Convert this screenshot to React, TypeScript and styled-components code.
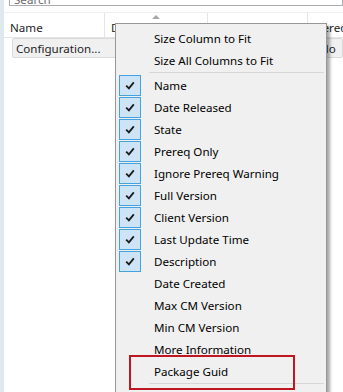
import React from 'react';
import styled, { createGlobalStyle } from 'styled-components';

const GlobalStyle = createGlobalStyle`
    html, body {
        margin: 0;
        padding: 0;
        background: #ffffff;
    }
    body {
        font-family: "Noto Sans", "Open Sans", "DejaVu Sans", sans-serif;
        font-size: 11.6px;
        color: #1e1e1e;
    }
`;

const Shell = styled.div`
    position: relative;
    display: flex;
    width: 343px;
    height: 392px;
    overflow: hidden;
    background: #ffffff;
`;

const WindowEdge = styled.div`
    width: 4px;
    flex-shrink: 0;
    background: #dfe7ef;
`;

const Main = styled.div`
    flex: 1;
    display: flex;
    flex-direction: column;
    min-width: 0;
`;

const SearchBox = styled.div`
    height: 5px;
    margin-left: 5px;
    border: 1px solid #abadb3;
    border-top: none;
    display: flex;
    align-items: flex-end;
    overflow: hidden;
    padding-left: 4px;
`;

const SearchHint = styled.span`
    line-height: 10px;
    color: #6d6d6d;
    white-space: nowrap;
`;

const HeaderRow = styled.div`
    display: flex;
    height: 26px;
    margin-top: 6px;
    border-top: 1px solid #efefef;
    border-bottom: 1px solid #e5e5e5;
    box-sizing: border-box;
`;

const HeaderCell = styled.div<{ $width: number; $pad?: number }>`
    position: relative;
    flex: 0 0 ${(p) => p.$width}px;
    box-sizing: border-box;
    border-right: 1px solid #e5e5e5;
    padding-left: ${(p) => p.$pad ?? 6}px;
    display: flex;
    align-items: center;
    padding-top: 4px;
    white-space: nowrap;
    overflow: hidden;
`;

const SortArrow = styled.span`
    position: absolute;
    top: 2px;
    left: 50%;
    margin-left: -4px;
    width: 0;
    height: 0;
    border-left: 4px solid transparent;
    border-right: 4px solid transparent;
    border-bottom: 4px solid #a7a7a7;
`;

const DataRow = styled.div`
    display: flex;
    height: 20px;
    margin-left: 8px;
    background: #f0f0f0;
    border: 1px solid #dadada;
    border-radius: 2px;
    box-sizing: border-box;
`;

const DataCell = styled.div<{ $width: number; $pad?: number }>`
    flex: 0 0 ${(p) => p.$width}px;
    padding-left: ${(p) => p.$pad ?? 3}px;
    box-sizing: border-box;
    display: flex;
    align-items: center;
    white-space: nowrap;
    overflow: hidden;
`;

const Menu = styled.div`
    position: absolute;
    left: 115px;
    top: 23px;
    width: 212px;
    height: 400px;
    box-sizing: border-box;
    background: #f0f0f0;
    border: 1px solid #979797;
    box-shadow: 3px 3px 3px rgba(0, 0, 0, 0.35);
    padding: 3px 2px;
    color: #000000;
`;

const MenuItem = styled.div`
    display: grid;
    grid-template-columns: 36px 1fr;
    align-items: center;
    height: 22px;
    white-space: nowrap;
`;

const CheckBox = styled.span<{ $on: boolean }>`
    width: 22px;
    height: 21px;
    margin-left: 1px;
    box-sizing: border-box;
    display: flex;
    align-items: center;
    justify-content: center;
    background: ${(p) => (p.$on ? '#cde4f7' : 'transparent')};
    border: 1px solid ${(p) => (p.$on ? '#45a2e0' : 'transparent')};
`;

const Separator = styled.div`
    height: 3px;
    margin-left: 31px;
    display: flex;
    align-items: center;

    &::after {
        content: '';
        flex: 1;
        height: 1px;
        background: #d7d7d7;
    }
`;

const Highlight = styled.div`
    position: absolute;
    left: 129px;
    top: 355px;
    width: 166px;
    height: 35px;
    box-sizing: border-box;
    border: 2px solid #bf1622;
`;

const Check = () => (
    <svg width="10" height="9" viewBox="0 0 10 9">
        <path d="M1.2 4.6 L3.9 7.3 L8.8 1.4" fill="none" stroke="#1b1b1b" strokeWidth="1.8" />
    </svg>
);

const columns: [string, boolean][] = [
    ['Name', true],
    ['Date Released', true],
    ['State', true],
    ['Prereq Only', true],
    ['Ignore Prereq Warning', true],
    ['Full Version', true],
    ['Client Version', true],
    ['Last Update Time', true],
    ['Description', true],
    ['Date Created', false],
    ['Max CM Version', false],
    ['Min CM Version', false],
    ['More Information', false],
    ['Package Guid', false],
];

const App: React.FC = () => {
    return (
        <Shell>
            <GlobalStyle />
            <WindowEdge />
            <Main>
                <SearchBox>
                    <SearchHint>Search</SearchHint>
                </SearchBox>
                <HeaderRow>
                    <HeaderCell $width={101}>Name</HeaderCell>
                    <HeaderCell $width={103}>
                        <SortArrow />
                        Date Released
                    </HeaderCell>
                    <HeaderCell $width={100}>State</HeaderCell>
                    <HeaderCell $width={60} $pad={3}>Prereq Only</HeaderCell>
                </HeaderRow>
                <DataRow>
                    <DataCell $width={93}>Configuration...</DataCell>
                    <DataCell $width={103} $pad={16}>5/14/2019</DataCell>
                    <DataCell $width={100}>Installed</DataCell>
                    <DataCell $width={60} $pad={11}>No</DataCell>
                </DataRow>
            </Main>

            <Menu>
                <MenuItem>
                    <span />
                    Size Column to Fit
                </MenuItem>
                <MenuItem>
                    <span />
                    Size All Columns to Fit
                </MenuItem>
                <Separator />
                {columns.map(([label, on]) => (
                    <MenuItem key={label}>
                        <CheckBox $on={on}>{on && <Check />}</CheckBox>
                        {label}
                    </MenuItem>
                ))}
                <Separator />
            </Menu>

            <Highlight />
        </Shell>
    );
};

export default App;
